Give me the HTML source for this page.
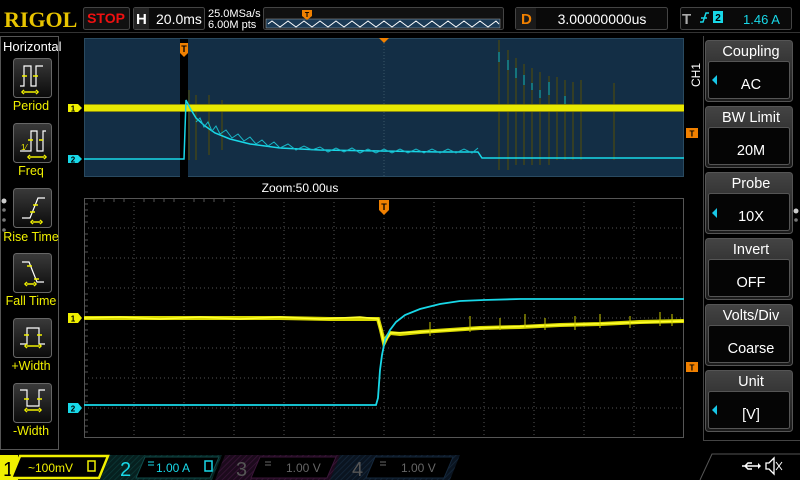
<!DOCTYPE html>
<html><head><meta charset="utf-8"><style>
html,body{margin:0;padding:0;background:#000;width:800px;height:480px;overflow:hidden}
svg{display:block}
text{font-family:"Liberation Sans",sans-serif}
</style></head><body>
<svg width="800" height="480" viewBox="0 0 800 480" xmlns="http://www.w3.org/2000/svg">
<defs>
<linearGradient id="btn" x1="0" y1="0" x2="0" y2="1"><stop offset="0" stop-color="#3a3a3a"/><stop offset="1" stop-color="#0a0a0a"/></linearGradient>
<linearGradient id="hdr" x1="0" y1="0" x2="0" y2="1"><stop offset="0" stop-color="#444"/><stop offset="1" stop-color="#1a1a1a"/></linearGradient>
<pattern id="h2" width="4" height="4" patternUnits="userSpaceOnUse" patternTransform="rotate(45)"><rect width="4" height="4" fill="#06201f"/><line x1="0" y1="0" x2="0" y2="4" stroke="#0c3a38" stroke-width="1.5"/></pattern>
<pattern id="h3" width="4" height="4" patternUnits="userSpaceOnUse" patternTransform="rotate(45)"><rect width="4" height="4" fill="#1c0a1c"/><line x1="0" y1="0" x2="0" y2="4" stroke="#3a1538" stroke-width="1.5"/></pattern>
<pattern id="h4" width="4" height="4" patternUnits="userSpaceOnUse" patternTransform="rotate(45)"><rect width="4" height="4" fill="#0a1420"/><line x1="0" y1="0" x2="0" y2="4" stroke="#15283c" stroke-width="1.5"/></pattern>
</defs>
<rect width="800" height="480" fill="#000"/>

<!-- TOP BAR -->
<text x="4" y="27" style="font-family:'Liberation Serif',serif;font-weight:bold;font-size:22px" fill="#e8c400">RIGOL</text>
<rect x="83.5" y="7.5" width="46" height="22" rx="2" fill="#111" stroke="#444"/>
<text x="106" y="23" text-anchor="middle" font-weight="bold" font-size="14" fill="#f01010">STOP</text>
<rect x="133.5" y="7.5" width="71" height="22" rx="2" fill="#0a0a0a" stroke="#444"/>
<rect x="134" y="8" width="15" height="21" fill="#222"/>
<text x="136" y="24" font-weight="bold" font-size="15" fill="#fff">H</text>
<text x="156" y="24" font-size="14" fill="#fff">20.0ms</text>
<text x="208" y="17" font-size="11" fill="#fff">25.0MSa/s</text>
<text x="208" y="28" font-size="11" fill="#fff">6.00M pts</text>
<rect x="263.5" y="7.5" width="240" height="22" rx="2" fill="#111" stroke="#444"/>
<rect x="266" y="19" width="234" height="9" fill="#1b3a55" stroke="#aaa" stroke-width="0.5"/>
<polyline fill="none" stroke="#fff" stroke-width="1" points="268,24 272,21 276,24 280,27 284,24 288,21 292,24 296,27 300,24 304,21 308,24 312,27 316,24 320,21 324,24 328,27 332,24 336,21 340,24 344,27 348,24 352,21 356,24 360,27 364,24 368,21 372,24 376,27 380,24 384,21 388,24 392,27 396,24 400,21 404,24 408,27 412,24 416,21 420,24 424,27 428,24 432,21 436,24 440,27 444,24 448,21 452,24 456,27 460,24 464,21 468,24 472,27 476,24 480,21 484,24 488,27 492,24 496,21 499,24"/>
<path d="M302,10 h10 v6 l-5,4 l-5,-4z" fill="#f08000"/>
<text x="307" y="17" text-anchor="middle" font-size="7" font-weight="bold" fill="#000">T</text>

<rect x="515.5" y="7.5" width="152" height="22" rx="2" fill="#0a0a0a" stroke="#444"/>
<rect x="516" y="8" width="20" height="21" fill="#1a1a1a"/>
<text x="521" y="24" font-weight="bold" font-size="15" fill="#f08000">D</text>
<text x="602" y="24" text-anchor="middle" font-size="14" fill="#fff">3.00000000us</text>
<rect x="680.5" y="7.5" width="111" height="22" rx="2" fill="#0a0a0a" stroke="#444"/>
<text x="682" y="24" font-weight="bold" font-size="15" fill="#aaa">T</text>
<path d="M700,22 h3 l3,-9 h3 M701,18 h6" stroke="#18d8e8" stroke-width="1.5" fill="none"/>
<rect x="713" y="11" width="10" height="12" fill="#18d8e8"/>
<text x="718" y="21" text-anchor="middle" font-size="10" font-weight="bold" fill="#000">2</text>
<text x="743" y="24" font-size="13" fill="#18d8e8">1.46 A</text>
<line x1="0" y1="32.5" x2="800" y2="32.5" stroke="#333"/>

<!-- LEFT PANEL -->
<text x="3" y="51" font-size="13" fill="#fff">Horizontal</text>
<rect x="0.5" y="36.5" width="58" height="413" fill="none" stroke="#555"/>
<g fill="url(#btn)" stroke="#666">
<rect x="13.5" y="58.5" width="38" height="39" rx="3"/>
<rect x="13.5" y="123.5" width="38" height="39" rx="3"/>
<rect x="13.5" y="188.5" width="38" height="39" rx="3"/>
<rect x="13.5" y="253.5" width="38" height="39" rx="3"/>
<rect x="13.5" y="318.5" width="38" height="39" rx="3"/>
<rect x="13.5" y="383.5" width="38" height="39" rx="3"/>
</g>
<g fill="none" stroke="#fff" stroke-width="1.2">
<path d="M20,86 h4 v-20 h7 v20 h5 v-20 h7"/>
<path d="M20,151 h11 v-20 h6 v20 h6 v-20 h3"/>
<path d="M22,218 h8 l8,-20 h7"/>
<path d="M22,262 h7 l8,20 h7"/>
<path d="M20,344 h7 v-16 h12 v16 h6"/>
<path d="M20,390 h7 v16 h12 v-16 h6"/>
</g>
<g fill="none" stroke="#f0f000" stroke-width="1.5">
<path d="M22,76 h5 M33,76 h5 M24,92 h12 M24,90 l-2,2 2,2 M36,90 l2,2 -2,2"/>
<path d="M28,140 h5 M39,140 h4 M30,157 h14 M30,155 l-2,2 2,2 M44,155 l2,2 -2,2"/>
<path d="M30,212 h5 M33,205 h5 M33,222 h7 M33,220 l-2,2 2,2 M40,220 l2,2 -2,2"/>
<path d="M27,266 h5 M34,279 h5 M27,284 h7 M27,282 l-2,2 2,2 M34,282 l2,2 -2,2"/>
<path d="M24,335 h5 M37,335 h5 M27,346 h12 M27,344 l-2,2 2,2 M39,344 l2,2 -2,2"/>
<path d="M24,399 h5 M37,399 h5 M27,410 h12 M27,408 l-2,2 2,2 M39,408 l2,2 -2,2"/>
</g>
<text x="21" y="150" font-size="8" fill="#f0f000">1⁄</text>
<g font-size="12.5" fill="#f0f000" text-anchor="middle">
<text x="31" y="110">Period</text><text x="31" y="175">Freq</text><text x="31" y="241">Rise Time</text>
<text x="31" y="305">Fall Time</text><text x="31" y="370">+Width</text><text x="31" y="435">-Width</text>
</g>
<circle cx="4" cy="201" r="2.5" fill="#ccc"/><circle cx="4" cy="210" r="1.8" fill="#777"/><circle cx="4" cy="220" r="1.8" fill="#777"/><circle cx="4" cy="230" r="1.8" fill="#777"/>

<!-- TOP ZOOM WINDOW -->
<rect x="84" y="38" width="600" height="139" fill="#132e45"/>
<rect x="84.5" y="38.5" width="599" height="138" fill="none" stroke="#2a4a60"/>
<rect x="180" y="39" width="8" height="138" fill="#000"/>
<line x1="384" y1="40" x2="384" y2="177" stroke="#3a5566" stroke-dasharray="1,2"/>
<path d="M379,38 h10 l-5,5z" fill="#f08000"/>
<path d="M180,43 h8 v10 l-4,4 l-4,-4z" fill="#f08000"/>
<text x="184" y="52" text-anchor="middle" font-size="9" font-weight="bold" fill="#000">T</text>
<g stroke="#4a4a10" stroke-width="1.2">
<line x1="189" y1="90" x2="189" y2="160"/><line x1="196" y1="95" x2="196" y2="160"/><line x1="209" y1="95" x2="209" y2="155"/><line x1="222" y1="100" x2="222" y2="150"/>
<line x1="499" y1="40" x2="499" y2="170"/><line x1="508" y1="50" x2="508" y2="170"/><line x1="516" y1="58" x2="516" y2="165"/><line x1="524" y1="64" x2="524" y2="165"/><line x1="532" y1="68" x2="532" y2="165"/><line x1="540" y1="72" x2="540" y2="165"/><line x1="549" y1="76" x2="549" y2="165"/><line x1="557" y1="77" x2="557" y2="160"/><line x1="565" y1="80" x2="565" y2="160"/><line x1="573" y1="82" x2="573" y2="160"/><line x1="581" y1="80" x2="581" y2="160"/><line x1="614" y1="83" x2="614" y2="160"/>
</g>
<g stroke="#10a0a8" stroke-width="1.2">
<line x1="499" y1="52" x2="499" y2="62"/><line x1="508" y1="60" x2="508" y2="70"/><line x1="516" y1="68" x2="516" y2="78"/><line x1="524" y1="75" x2="524" y2="85"/><line x1="532" y1="83" x2="532" y2="90"/><line x1="540" y1="90" x2="540" y2="98"/><line x1="549" y1="82" x2="549" y2="95"/><line x1="565" y1="96" x2="565" y2="104"/>
</g>
<rect x="84" y="105" width="600" height="6" fill="#e8e800"/>
<rect x="84" y="104" width="600" height="1" fill="#8a8a10"/>
<rect x="84" y="111" width="600" height="1" fill="#8a8a10"/>
<polyline fill="none" stroke="#18d8e8" stroke-width="1.5" points="84,159 184,159 186,100 190,108 196,118 205,126 215,133 230,139 250,144 280,148 320,150 380,151 440,152 478,152 482,158 684,158"/>
<polyline fill="none" stroke="#18b8c8" stroke-width="1" points="196,122 200,118 204,127 208,122 212,131 216,126 220,134 226,130 232,138 238,134 244,141 250,137 256,144 262,140 268,146 274,142 280,148 288,144 296,150 304,146 312,150 320,147 328,152 336,148 344,152 352,148 360,153 368,149 376,153 384,149 392,153 400,149 408,153 416,149 424,153 432,149 440,153 448,149 456,153 464,149 472,153 478,148"/>
<path d="M68,104 h10 l4,4 -4,4 h-10z" fill="#f0f000"/><text x="73" y="111.5" text-anchor="middle" font-size="8" font-weight="bold" fill="#000">1</text>
<path d="M68,155 h10 l4,4 -4,4 h-10z" fill="#18d8e8"/><text x="73" y="162.5" text-anchor="middle" font-size="8" font-weight="bold" fill="#000">2</text>
<text x="300" y="192" text-anchor="middle" font-size="12" fill="#fff">Zoom:50.00us</text>

<!-- MAIN GRID -->
<g stroke="#555" stroke-dasharray="1,3" stroke-width="1">
<line x1="134" y1="198" x2="134" y2="438"/><line x1="184" y1="198" x2="184" y2="438"/><line x1="234" y1="198" x2="234" y2="438"/><line x1="284" y1="198" x2="284" y2="438"/><line x1="334" y1="198" x2="334" y2="438"/><line x1="384" y1="198" x2="384" y2="438"/><line x1="434" y1="198" x2="434" y2="438"/><line x1="484" y1="198" x2="484" y2="438"/><line x1="534" y1="198" x2="534" y2="438"/><line x1="584" y1="198" x2="584" y2="438"/><line x1="634" y1="198" x2="634" y2="438"/>
<line x1="84" y1="228" x2="684" y2="228"/><line x1="84" y1="258" x2="684" y2="258"/><line x1="84" y1="288" x2="684" y2="288"/><line x1="84" y1="318" x2="684" y2="318"/><line x1="84" y1="348" x2="684" y2="348"/><line x1="84" y1="378" x2="684" y2="378"/><line x1="84" y1="408" x2="684" y2="408"/>
</g>
<rect x="84.5" y="198.5" width="599" height="239" fill="none" stroke="#555"/>
<g stroke="#555">
<path d="M94,198v4M104,198v4M114,198v4M124,198v4M144,198v4M154,198v4M164,198v4M174,198v4M194,198v4M204,198v4M214,198v4M224,198v4"/>
<path d="M84,204h4M84,210h4M84,216h4M84,222h4M84,234h4M84,240h4M84,246h4M84,252h4M84,264h4M84,270h4M84,276h4M84,282h4M84,294h4M84,300h4M84,306h4M84,312h4M84,324h4M84,330h4M84,336h4M84,342h4M84,354h4M84,360h4M84,366h4M84,372h4M84,384h4M84,390h4M84,396h4M84,402h4M84,414h4M84,420h4M84,426h4M84,432h4"/>
</g>
<path d="M379,200 h10 v10 l-5,5 l-5,-5z" fill="#f08000"/>
<text x="384" y="210" text-anchor="middle" font-size="9" font-weight="bold" fill="#000">T</text>
<polyline fill="none" stroke="#d8d800" stroke-width="4" points="84,318 130,318 180,318 230,318 280,318 330,319 378,319 381,330 384,343 387,337 390,333 400,334 420,332 450,330 480,328 520,327 560,325 600,324 640,322 684,321"/>
<polyline fill="none" stroke="#ffff30" stroke-width="1.5" points="84,318 120,317 160,319 200,317 240,319 280,317 320,319 360,317 378,319 384,343 390,333 420,332 480,328 560,325 684,321"/>
<g stroke="#c8c800" stroke-width="1"><path d="M430,322v14M470,316v16M500,318v12M525,314v14M545,318v12M575,316v14M600,314v14M630,316v12M660,312v14M672,314v12"/></g>
<polyline fill="none" stroke="#18d8e8" stroke-width="1.8" points="84,405 376,405 378,398 380,370 382,355 385,340 390,330 396,322 405,315 420,309 440,304 460,301 484,300 520,299 684,299"/>
<path d="M68,313 h10 l4,5 -4,5 h-10z" fill="#f0f000"/><text x="73" y="321.5" text-anchor="middle" font-size="8" font-weight="bold" fill="#000">1</text>
<path d="M68,403 h10 l4,5 -4,5 h-10z" fill="#18d8e8"/><text x="73" y="411.5" text-anchor="middle" font-size="8" font-weight="bold" fill="#000">2</text>

<!-- RIGHT PANEL -->
<line x1="703.5" y1="36" x2="703.5" y2="440" stroke="#444"/>
<line x1="703" y1="440.5" x2="800" y2="440.5" stroke="#444"/>
<text transform="translate(700,75) rotate(-90)" text-anchor="middle" font-size="12" fill="#fff">CH1</text>
<path d="M686,128 h12 v10 h-12z" fill="#f08000"/><text x="692" y="136.5" text-anchor="middle" font-size="8" font-weight="bold" fill="#000">T</text>
<path d="M686,362 h12 v10 h-12z" fill="#f08000"/><text x="692" y="370.5" text-anchor="middle" font-size="8" font-weight="bold" fill="#000">T</text>
<g>
<rect x="705.5" y="40.5" width="87" height="61" rx="3" fill="url(#hdr)" stroke="#555"/><rect x="708.5" y="61.5" width="81" height="37" rx="2" fill="#050505" stroke="#555"/>
<rect x="705.5" y="106.5" width="87" height="61" rx="3" fill="url(#hdr)" stroke="#555"/><rect x="708.5" y="127.5" width="81" height="37" rx="2" fill="#050505" stroke="#555"/>
<rect x="705.5" y="172.5" width="87" height="61" rx="3" fill="url(#hdr)" stroke="#555"/><rect x="708.5" y="193.5" width="81" height="37" rx="2" fill="#050505" stroke="#555"/>
<rect x="705.5" y="238.5" width="87" height="61" rx="3" fill="url(#hdr)" stroke="#555"/><rect x="708.5" y="259.5" width="81" height="37" rx="2" fill="#050505" stroke="#555"/>
<rect x="705.5" y="304.5" width="87" height="61" rx="3" fill="url(#hdr)" stroke="#555"/><rect x="708.5" y="325.5" width="81" height="37" rx="2" fill="#050505" stroke="#555"/>
<rect x="705.5" y="370.5" width="87" height="61" rx="3" fill="url(#hdr)" stroke="#555"/><rect x="708.5" y="391.5" width="81" height="37" rx="2" fill="#050505" stroke="#555"/>
</g>
<g font-size="14.5" fill="#fff" text-anchor="middle">
<text x="751" y="56">Coupling</text><text x="751" y="89">AC</text>
<text x="751" y="122">BW Limit</text><text x="751" y="155">20M</text>
<text x="751" y="188">Probe</text><text x="751" y="221">10X</text>
<text x="751" y="254">Invert</text><text x="751" y="287">OFF</text>
<text x="751" y="320">Volts/Div</text><text x="751" y="353">Coarse</text>
<text x="751" y="386">Unit</text><text x="751" y="419">[V]</text>
</g>
<path d="M717,75 l-5,5 5,5z" fill="#18c8e8"/><path d="M717,208 l-5,5 5,5z" fill="#18c8e8"/><path d="M717,405 l-5,5 5,5z" fill="#18c8e8"/>
<circle cx="796" cy="211" r="2.5" fill="#ccc"/><circle cx="796" cy="220" r="1.8" fill="#777"/>

<!-- BOTTOM BAR -->
<rect x="0" y="455" width="18" height="25" fill="#f0f000"/>
<text x="3" y="476" font-size="20" fill="#000">1</text>
<path d="M20,456 h88 l-9,22 h-88z" fill="#000" stroke="#f0f000" stroke-width="2.5"/>
<text x="28" y="472" font-size="12" fill="#f0f000">~100mV</text>
<rect x="88" y="461" width="7" height="10" fill="none" stroke="#f0f000" stroke-width="1.5"/>
<path d="M110,455 h112 l-10,25 h-112z" fill="url(#h2)"/>
<text x="120" y="476" font-size="20" fill="#18d8e8">2</text>
<path d="M145,457 h74 l-9,21 h-74z" fill="#000" stroke="#0f4a48"/>
<path d="M148,462 h6 M148,465 h6" stroke="#18d8e8"/>
<text x="156" y="472" font-size="12" fill="#18d8e8">1.00 A</text>
<rect x="205" y="461" width="7" height="10" fill="none" stroke="#18d8e8" stroke-width="1.5"/>
<path d="M225,455 h115 l-10,25 h-115z" fill="url(#h3)"/>
<text x="236" y="476" font-size="20" fill="#555">3</text>
<path d="M260,457 h76 l-9,21 h-76z" fill="#000" stroke="#3a1538"/>
<path d="M265,462 h6 M265,465 h6" stroke="#666"/>
<text x="286" y="472" font-size="12" fill="#666">1.00 V</text>
<path d="M340,455 h120 l-10,25 h-120z" fill="url(#h4)"/>
<text x="352" y="476" font-size="20" fill="#555">4</text>
<path d="M375,457 h78 l-9,21 h-78z" fill="#000" stroke="#15283c"/>
<path d="M380,462 h6 M380,465 h6" stroke="#666"/>
<text x="401" y="472" font-size="12" fill="#666">1.00 V</text>
<path d="M700,480 l12,-26 h88" fill="none" stroke="#555"/>
<path d="M742,466 h16 M745,466 l3,-3 h4 M745,466 l3,3 h4" stroke="#fff" stroke-width="1.5" fill="none"/>
<path d="M758,463 l3,3 -3,3z" fill="#fff"/>
<path d="M766,463 h3 l5,-5 v16 l-5,-5 h-3z" fill="none" stroke="#fff" stroke-width="1.3"/>
<path d="M776,462 l6,8 M782,462 l-6,8" stroke="#fff" stroke-width="1"/>
</svg>
</body></html>
